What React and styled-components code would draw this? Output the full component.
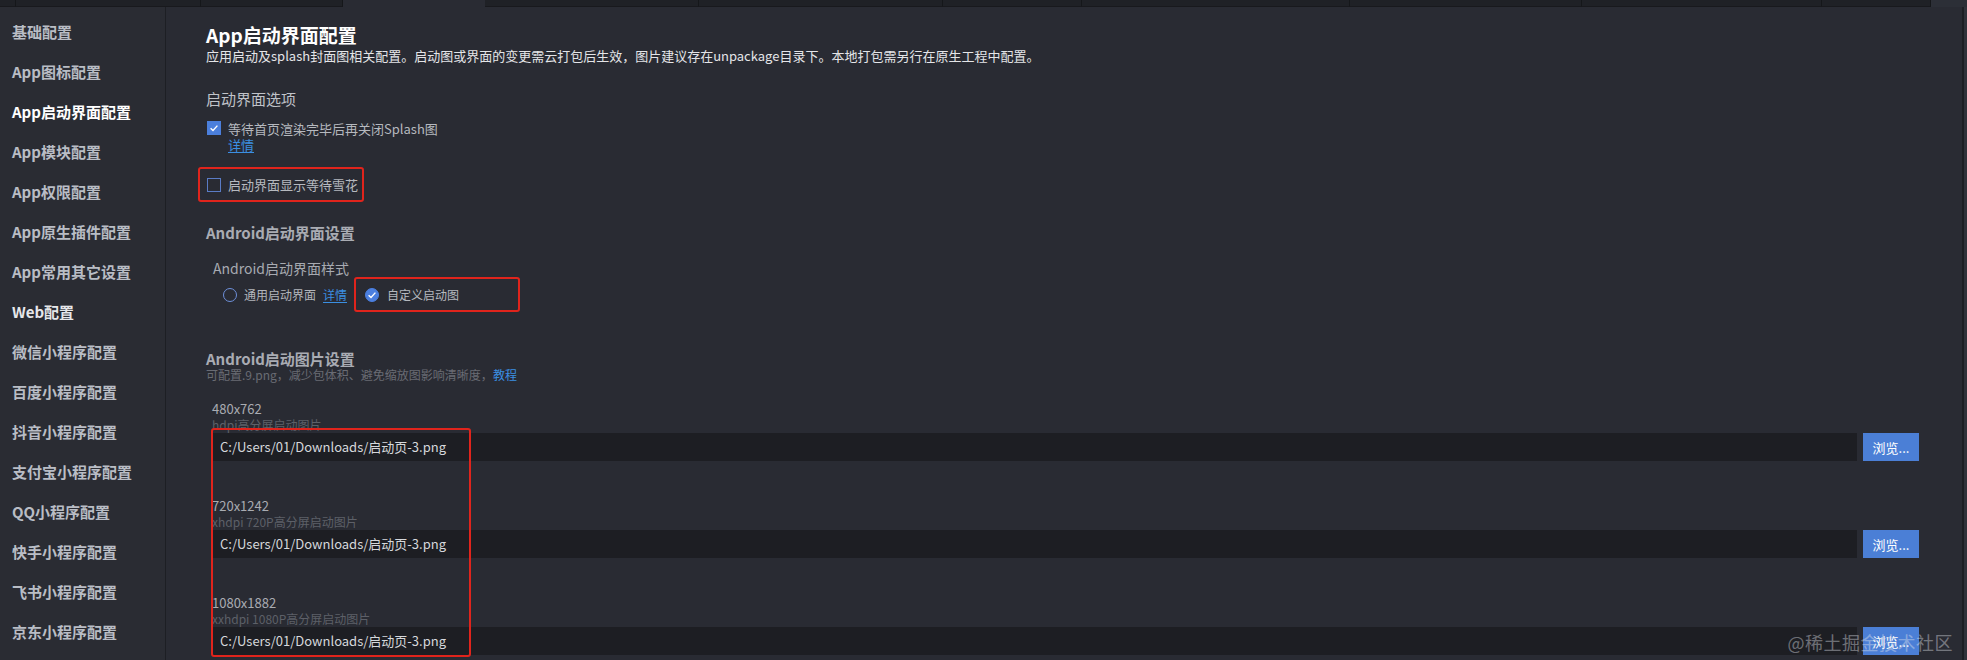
import React from 'react'
import styled, { createGlobalStyle } from 'styled-components'

const GlobalStyle = createGlobalStyle`
  html, body {
    margin: 0;
    padding: 0;
    background: #292b33;
  }
  body {
    font-family: "Noto Sans CJK SC", "Noto Sans", sans-serif;
  }
`

const Page = styled.div`
  width: 1967px;
  height: 660px;
  overflow: hidden;
  background: #292b33;
  display: flex;
  flex-direction: column;
  position: relative;
`

const TabStrip = styled.div`
  height: 7px;
  display: flex;
  background: #2c2f37;
  flex-shrink: 0;
`

const Tab = styled.div`
  width: ${p => p.w}px;
  height: 100%;
  box-sizing: border-box;
  background: ${p => (p.active ? '#292b33' : '#1f2126')};
  border-right: 1px solid ${p => (p.active ? '#292b33' : '#15171a')};
  border-bottom: ${p => (p.active ? 'none' : '1px solid #18191d')};
`

const Body = styled.div`
  flex: 1;
  display: flex;
  min-height: 0;
`

const Sidebar = styled.div`
  width: 166px;
  flex-shrink: 0;
  background: #2a2c33;
  border-right: 1px solid #1d1f24;
  padding-top: 5px;
  box-sizing: border-box;
`

const NavItem = styled.div`
  height: 40px;
  line-height: 40px;
  padding-left: 12px;
  font-size: 15px;
  font-weight: 700;
  color: ${p => (p.active ? '#ffffff' : p.light ? '#e6e7ea' : '#b9bdc5')};
  white-space: nowrap;
`

const Main = styled.div`
  flex: 1;
  padding: 16px 0 0 40px;
  position: relative;
  min-width: 0;
`

const ScrollEdge = styled.div`
  width: 3px;
  flex-shrink: 0;
  background: #30333b;
  border-left: 2px solid #1d1f24;
`

const Title = styled.div`
  font-size: 19px;
  font-weight: 700;
  line-height: 24px;
  color: #ffffff;
`

const Subtitle = styled.div`
  font-size: 13px;
  line-height: 18px;
  color: #e4e5e8;
`

const SectionTitle = styled.div`
  font-size: 15px;
  line-height: 20px;
  color: #c0c3c9;
  margin-top: ${p => p.mt || 0}px;
`

const SectionHeading = styled.div`
  font-size: 15px;
  font-weight: 700;
  line-height: ${p => p.lh || 20}px;
  color: #a9acb3;
  margin-top: ${p => p.mt || 0}px;
`

const CheckRow = styled.div`
  display: flex;
  align-items: center;
  gap: 7px;
  height: 18px;
  margin-top: 10px;
  margin-left: 1px;
  font-size: 13px;
  color: #b6b9bf;
`

const Box = styled.span`
  width: 14px;
  height: 14px;
  box-sizing: border-box;
  flex-shrink: 0;
  display: inline-flex;
  align-items: center;
  justify-content: center;
  background: ${p => (p.checked ? '#4b7fdc' : 'transparent')};
  border: 1px solid ${p => (p.checked ? '#4b7fdc' : '#5a7cc6')};
`

const Round = styled(Box)`
  border-radius: 50%;
  border-width: ${p => (p.checked ? 1 : 1.5)}px;
  border-color: ${p => (p.checked ? '#4b7fe0' : '#6e90da')};
  background: ${p => (p.checked ? '#4b7fe0' : 'transparent')};
`

const Link = styled.a`
  color: #3b8fe2;
  text-decoration: underline;
  text-underline-offset: 2px;
  font-size: ${p => p.size || 13}px;
  cursor: pointer;
`

const DetailLine = styled.div`
  padding-left: 22px;
  line-height: 16px;
  font-size: 13px;
`

const Highlight = styled.div`
  display: ${p => (p.block ? 'flex' : 'inline-flex')};
  align-items: center;
  gap: ${p => p.gap || 7}px;
  box-sizing: border-box;
  height: 35px;
  width: ${p => p.w}px;
  border: 2px solid #e0241c;
  border-radius: 3px;
  padding-left: ${p => p.pl}px;
  margin-left: ${p => p.ml || 0}px;
  margin-top: ${p => p.mt || 0}px;
  font-size: ${p => p.size || 13}px;
  color: #b6b9bf;
`

const StyleLabel = styled.div`
  margin-top: 16px;
  margin-left: 7px;
  font-size: 14px;
  line-height: 18px;
  color: #a7aab1;
`

const RadioRow = styled.div`
  display: flex;
  align-items: center;
  height: 35px;
  margin-left: 17px;
  font-size: 12px;
  color: #b3b6bc;
`

const RadioOption = styled.label`
  display: inline-flex;
  align-items: center;
  gap: 7px;
`

const Hint = styled.div`
  font-size: 12px;
  line-height: 14px;
  color: #696c74;
`

const ImageList = styled.div`
  position: relative;
  margin-top: 18px;
  padding-left: 6px;
  padding-right: 43px;
`

const ImageItem = styled.div`
  margin-bottom: 36px;
`

const SizeLabel = styled.div`
  font-size: 13px;
  line-height: 17px;
  color: #a9acb2;
`

const SizeHint = styled.div`
  font-size: 12px;
  line-height: 16px;
  color: #5d6068;
`

const FileRow = styled.div`
  display: flex;
  gap: 6px;
  height: 28px;
`

const PathInput = styled.div`
  flex: 1;
  background: #1d1e23;
  color: #d6d8dc;
  font-size: 13px;
  line-height: 28px;
  padding-left: 8px;
`

const BrowseButton = styled.button`
  width: 56px;
  height: 28px;
  border: none;
  background: #4b7fd6;
  color: #ffffff;
  font-family: inherit;
  font-size: 13px;
  padding: 0;
`

const Annotation = styled.div`
  position: absolute;
  left: 5px;
  top: 28px;
  width: 260px;
  height: 229px;
  box-sizing: border-box;
  border: 2px solid #e0241c;
  border-radius: 3px;
  pointer-events: none;
`

const Watermark = styled.div`
  position: absolute;
  right: 9px;
  bottom: 6px;
  font-size: 18px;
  line-height: 24px;
  color: rgba(225, 228, 235, 0.42);
  letter-spacing: 0.5px;
`

const tabs = [16, 185, 142, 142, 214, 244, 139, 268, 232, 240, 109]

const navItems = [
  { label: '基础配置' },
  { label: 'App图标配置' },
  { label: 'App启动界面配置', active: true },
  { label: 'App模块配置' },
  { label: 'App权限配置' },
  { label: 'App原生插件配置' },
  { label: 'App常用其它设置' },
  { label: 'Web配置', light: true },
  { label: '微信小程序配置' },
  { label: '百度小程序配置' },
  { label: '抖音小程序配置' },
  { label: '支付宝小程序配置' },
  { label: 'QQ小程序配置' },
  { label: '快手小程序配置' },
  { label: '飞书小程序配置' },
  { label: '京东小程序配置' }
]

const images = [
  { size: '480x762', hint: 'hdpi高分屏启动图片' },
  { size: '720x1242', hint: 'xhdpi 720P高分屏启动图片' },
  { size: '1080x1882', hint: 'xxhdpi 1080P高分屏启动图片' }
]

const Tick = () => (
  <svg width="10" height="10" viewBox="0 0 10 10">
    <path d="M1.6 5.2 L4 7.4 L8.4 2.6" fill="none" stroke="#ffffff" strokeWidth="1.4" />
  </svg>
)

export default function App() {
  return (
    <Page>
      <GlobalStyle />
      <TabStrip>
        {tabs.map((w, i) => (
          <Tab key={i} w={w} active={i === 3} />
        ))}
      </TabStrip>
      <Body>
        <Sidebar>
          {navItems.map(item => (
            <NavItem key={item.label} active={item.active} light={item.light}>
              {item.label}
            </NavItem>
          ))}
        </Sidebar>
        <Main>
          <Title>App启动界面配置</Title>
          <Subtitle>
            应用启动及splash封面图相关配置。启动图或界面的变更需云打包后生效，图片建议存在unpackage目录下。本地打包需另行在原生工程中配置。
          </Subtitle>

          <SectionTitle mt={24}>启动界面选项</SectionTitle>
          <CheckRow>
            <Box checked><Tick /></Box>
            等待首页渲染完毕后再关闭Splash图
          </CheckRow>
          <DetailLine><Link>详情</Link></DetailLine>
          <Highlight block w={166} pl={7} ml={-8} mt={14} gap={7}>
            <Box />
            启动界面显示等待雪花
          </Highlight>

          <SectionHeading mt={21}>Android启动界面设置</SectionHeading>
          <StyleLabel>Android启动界面样式</StyleLabel>
          <RadioRow>
            <RadioOption>
              <Round />
              通用启动界面
            </RadioOption>
            <Link size={12} style={{ marginLeft: 7 }}>详情</Link>
            <Highlight w={166} pl={9} ml={7} size={12} gap={8}>
              <Round checked><Tick /></Round>
              自定义启动图
            </Highlight>
          </RadioRow>

          <SectionHeading mt={38} lh={18}>Android启动图片设置</SectionHeading>
          <Hint>
            可配置.9.png，减少包体积、避免缩放图影响清晰度，<Link size={12} style={{ textDecoration: 'none' }}>教程</Link>
          </Hint>

          <ImageList>
            {images.map(img => (
              <ImageItem key={img.size}>
                <SizeLabel>{img.size}</SizeLabel>
                <SizeHint>{img.hint}</SizeHint>
                <FileRow>
                  <PathInput>C:/Users/01/Downloads/启动页-3.png</PathInput>
                  <BrowseButton>浏览...</BrowseButton>
                </FileRow>
              </ImageItem>
            ))}
            <Annotation />
          </ImageList>
          <Watermark>@稀土掘金技术社区</Watermark>
        </Main>
        <ScrollEdge />
      </Body>
    </Page>
  )
}
